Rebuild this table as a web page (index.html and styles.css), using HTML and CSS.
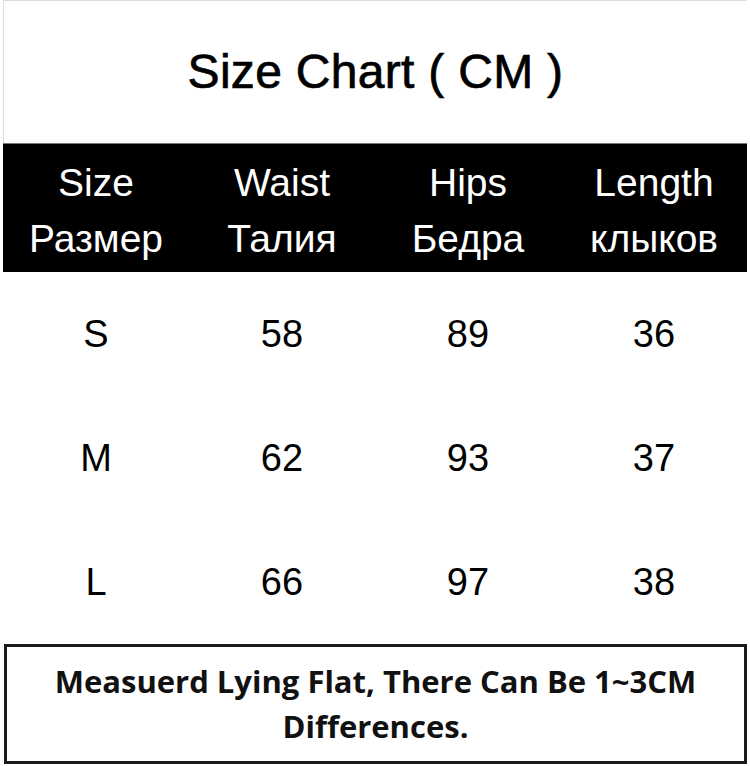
FILE: index.html
```html
<!DOCTYPE html>
<html>
<head>
<meta charset="utf-8">
<link rel="stylesheet" href="styles.css">
</head>
<body>
<div class="page">
  <div class="top">
    <h1 class="title">Size Chart ( CM )</h1>
  </div>
  <div class="head">
    <div class="cell">Size<br>Размер</div>
    <div class="cell">Waist<br>Талия</div>
    <div class="cell">Hips<br>Бедра</div>
    <div class="cell">Length<br>клыков</div>
  </div>
  <div class="rows">
    <div class="row"><span>S</span><span>58</span><span>89</span><span>36</span></div>
    <div class="row"><span>M</span><span>62</span><span>93</span><span>37</span></div>
    <div class="row"><span>L</span><span>66</span><span>97</span><span>38</span></div>
  </div>
  <div class="note">Measuerd Lying Flat, There Can Be 1~3CM<br>Differences.</div>
</div>
</body>
</html>
```

FILE: styles.css
```css
html, body {
  margin: 0;
  padding: 0;
  background: #fff;
}
.page {
  width: 750px;
  height: 766px;
  box-sizing: border-box;
  padding: 0 3px 0 3px;
  font-family: "Liberation Sans", Arial, sans-serif;
  color: #000;
  overflow: hidden;
}
.top {
  height: 143px;
  box-sizing: border-box;
  border-top: 1px solid #ddd;
  border-left: 1px solid #ddd;
  display: flex;
  align-items: center;
  justify-content: center;
}
.title {
  margin: 0;
  font-size: 48px;
  font-weight: normal;
  letter-spacing: 0.3px;
  padding-bottom: 2px;
  -webkit-text-stroke: 0.7px #000;
}
.head {
  height: 129px;
  box-sizing: border-box;
  background: #000;
  color: #fff;
  display: grid;
  grid-template-columns: repeat(4, 1fr);
  padding-top: 11px;
  border-top: 1px solid #777;
}
.head .cell {
  text-align: center;
  font-size: 39px;
  line-height: 56px;
}
.rows {
  display: flex;
  flex-direction: column;
}
.row {
  height: 124px;
  display: grid;
  grid-template-columns: repeat(4, 1fr);
  align-items: center;
  text-align: center;
  font-size: 38px;
}
.note {
  height: 120px;
  box-sizing: border-box;
  border: 3px solid #1a1a1a;
  margin: 0 0 0 1px;
  display: flex;
  align-items: center;
  justify-content: center;
  text-align: center;
  font-family: "Open Sans", "Noto Sans", sans-serif;
  font-weight: 700;
  font-size: 31px;
  line-height: 45px;
  letter-spacing: 0;
  color: #111;
}
```
